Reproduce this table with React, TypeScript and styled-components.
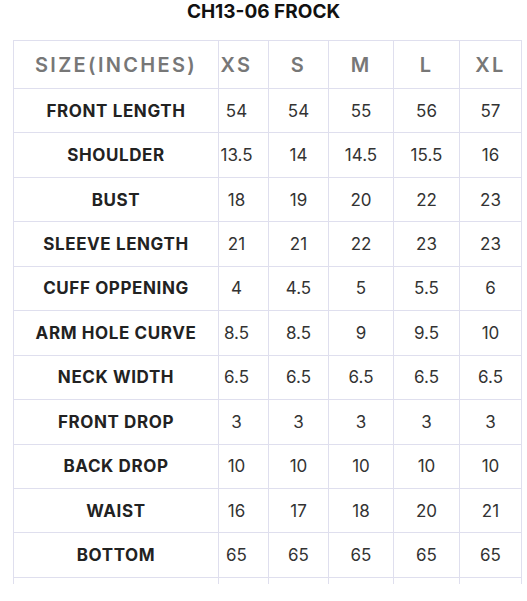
import React from 'react'
import styled, { createGlobalStyle } from 'styled-components'

const GlobalStyle = createGlobalStyle`
  html, body {
    margin: 0;
    padding: 0;
    background: #ffffff;
  }
  body {
    font-family: Inter, 'Liberation Sans', sans-serif;
  }
`

const COLS = '205px 50px 60px 65px 66px 62px'
const LINE = '#dfdfee'

const sizes = ['XS', 'S', 'M', 'L', 'XL']

const rows: [string, string[]][] = [
  ['FRONT LENGTH', ['54', '54', '55', '56', '57']],
  ['SHOULDER', ['13.5', '14', '14.5', '15.5', '16']],
  ['BUST', ['18', '19', '20', '22', '23']],
  ['SLEEVE LENGTH', ['21', '21', '22', '23', '23']],
  ['CUFF OPPENING', ['4', '4.5', '5', '5.5', '6']],
  ['ARM HOLE CURVE', ['8.5', '8.5', '9', '9.5', '10']],
  ['NECK WIDTH', ['6.5', '6.5', '6.5', '6.5', '6.5']],
  ['FRONT DROP', ['3', '3', '3', '3', '3']],
  ['BACK DROP', ['10', '10', '10', '10', '10']],
  ['WAIST', ['16', '17', '18', '20', '21']],
  ['BOTTOM', ['65', '65', '65', '65', '65']],
]

export default function App() {
  return (
    <>
      <GlobalStyle />
      <Page>
        <Title>CH13-06 FROCK</Title>
        <Frame>
          <Row $height={48}>
            <HeadCell>SIZE(INCHES)</HeadCell>
            {sizes.map((s, i) => (
              <HeadCell key={s} $shift={i === 0}>
                {s}
              </HeadCell>
            ))}
          </Row>
          {rows.map(([label, values]) => (
            <Row key={label} $height={44.45}>
              <LabelCell>{label}</LabelCell>
              {values.map((v, i) => (
                <ValueCell key={i} $shift={i === 0}>
                  {v}
                </ValueCell>
              ))}
            </Row>
          ))}
          {/* next row is cut off by the frame */}
          <Row $height={44} $open>
            <LabelCell />
            {sizes.map((s) => (
              <ValueCell key={s} />
            ))}
          </Row>
        </Frame>
      </Page>
    </>
  )
}

const Page = styled.div`
  width: 527px;
  height: 601px;
  overflow: hidden;
  background: #fff;
`

const Title = styled.h1`
  margin: 0;
  height: 24px;
  line-height: 24px;
  text-align: center;
  font-family: Inter, 'Liberation Sans', sans-serif;
  font-weight: 700;
  font-size: 19px;
  color: #111;
  letter-spacing: 0;
`

const Frame = styled.div`
  margin: 16px 0 0 13px;
  width: 509px;
  height: 544px;
  overflow: hidden;
  border-top: 1px solid ${LINE};
  border-left: 1px solid ${LINE};
  box-sizing: border-box;
`

const Row = styled.div<{ $height: number; $open?: boolean }>`
  display: grid;
  grid-template-columns: ${COLS};
  height: ${(p) => p.$height}px;
  border-bottom: ${(p) => (p.$open ? 'none' : `1px solid ${LINE}`)};
  box-sizing: border-box;
`

const Cell = styled.div<{ $shift?: boolean }>`
  display: flex;
  align-items: center;
  justify-content: center;
  border-right: 1px solid ${LINE};
  padding-right: ${(p) => (p.$shift ? '14px' : '0')};
  box-sizing: border-box;
  white-space: nowrap;
`

const HeadCell = styled(Cell)`
  font-family: Inter, 'Liberation Sans', sans-serif;
  font-weight: 600;
  font-size: 20px;
  letter-spacing: 2.3px;
  color: #777;
`

const LabelCell = styled(Cell)`
  font-family: Inter, 'Liberation Sans', sans-serif;
  font-weight: 700;
  font-size: 17px;
  letter-spacing: 0.6px;
  color: #222;
`

const ValueCell = styled(Cell)`
  font-family: Inter, 'Liberation Sans', sans-serif;
  font-weight: 400;
  font-size: 17px;
  color: #333;
`
